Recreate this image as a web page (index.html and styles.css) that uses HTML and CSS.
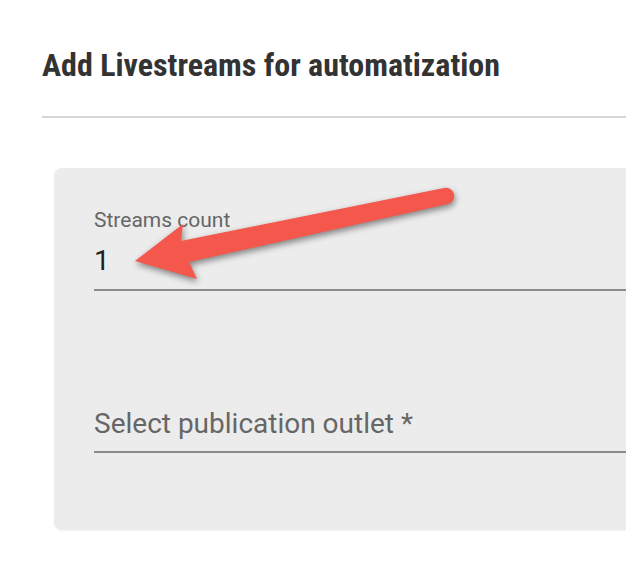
FILE: index.html
```html
<!DOCTYPE html>
<html lang="en">
<head>
<meta charset="utf-8">
<title>Add Livestreams</title>
<link rel="stylesheet" href="styles.css">
</head>
<body>
<div class="page">
  <header class="header">
    <h1 class="title">Add Livestreams for automatization</h1>
  </header>
  <div class="divider"></div>
  <section class="card">
    <div class="field">
      <div class="field-label">Streams count</div>
      <div class="field-value">1</div>
    </div>
    <div class="field field-select">
      <div class="field-placeholder">Select publication outlet *</div>
    </div>
  </section>
  <svg class="annotation" width="626" height="578" viewBox="0 0 626 578" aria-hidden="true">
    <path class="arrow" d="M135,261 L183,224 L181,241 L444,188 A8,8 0 0 1 448,204 L189,262 L197,279 Z"/>
  </svg>
</div>
</body>
</html>
```

FILE: styles.css
```css
html, body {
  margin: 0;
  padding: 0;
  background: #ffffff;
  overflow: hidden;
}

.page {
  position: relative;
  width: 626px;
  height: 578px;
  overflow: hidden;
  font-family: Roboto, "Noto Sans", sans-serif;
}

.header {
  padding: 47px 0 0 42px;
  height: 116px;
  box-sizing: border-box;
}

.title {
  margin: 0;
  font-family: "Roboto Condensed", "Liberation Sans Narrow", Roboto, sans-serif;
  font-stretch: condensed;
  font-weight: 700;
  font-size: 32px;
  line-height: 36px;
  color: #333333;
  white-space: nowrap;
}

.divider {
  margin-left: 42px;
  height: 2px;
  background: #d7d7d7;
}

.card {
  margin: 50px -40px 0 54px;
  padding: 40px 0 77px 40px;
  background: #ececec;
  border-radius: 8px;
  box-shadow: 0 1px 2px rgba(0, 0, 0, 0.06);
}

.field {
  border-bottom: 2px solid #8a8a8a;
}

.field-label {
  font-size: 21px;
  line-height: 24px;
  color: #666666;
}

.field-value {
  margin-top: 13px;
  padding-bottom: 12px;
  font-size: 28px;
  line-height: 32px;
  color: #222222;
}

.field-select {
  margin-top: 117px;
  padding-bottom: 11px;
}

.field-placeholder {
  font-size: 28px;
  line-height: 32px;
  color: #666666;
}

.annotation {
  position: absolute;
  left: 0;
  top: 0;
  pointer-events: none;
}

.arrow {
  fill: #f4574b;
  filter: drop-shadow(1px 3px 3px rgba(0, 0, 0, 0.45));
}
```
